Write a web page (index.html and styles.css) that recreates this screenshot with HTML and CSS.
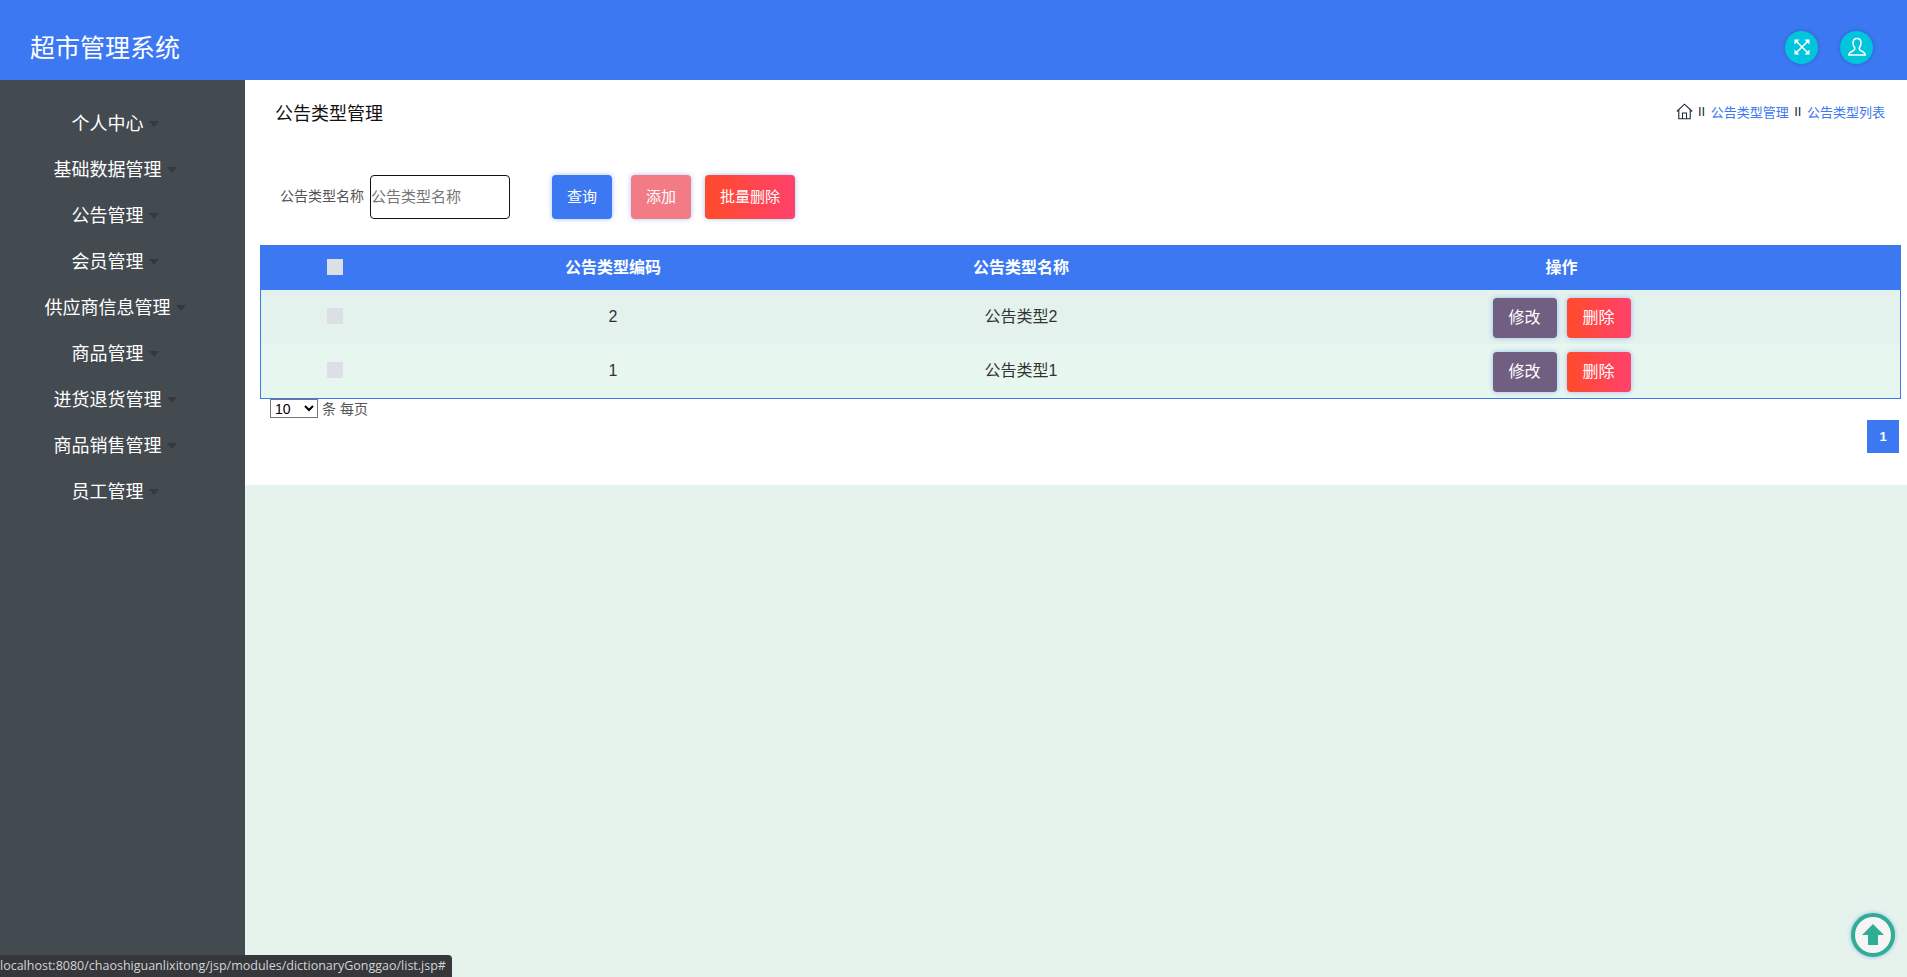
FILE: index.html
```html
<!DOCTYPE html>
<html>
<head>
<meta charset="utf-8">
<link rel="stylesheet" href="styles.css">
<title>超市管理系统</title>
</head>
<body>
<header class="topbar">
  <div class="brand">超市管理系统</div>
  <div class="top-actions">
    <a class="round-btn" href="#">
      <svg width="18" height="18" viewBox="0 0 18 18" fill="none" stroke="#fff" stroke-width="1.5">
        <path d="M3 3 L15 15 M15 3 L3 15"/>
        <path d="M1.5 6.5 V1.5 H6.5 Z M16.5 6.5 V1.5 H11.5 Z M1.5 11.5 V16.5 H6.5 Z M16.5 11.5 V16.5 H11.5 Z" fill="#fff" stroke="none"/>
      </svg>
    </a>
    <a class="round-btn" href="#">
      <svg width="20" height="20" viewBox="0 0 20 20" fill="none" stroke="#fff" stroke-width="1.5">
        <path d="M10 1.5 C7.3 1.5 6 3.5 6 6 C6 8.5 7 10 7.8 11 C8 12.5 7.5 13.2 6 13.8 C4 14.6 2 15.2 1.8 18 H18.2 C18 15.2 16 14.6 14 13.8 C12.5 13.2 12 12.5 12.2 11 C13 10 14 8.5 14 6 C14 3.5 12.7 1.5 10 1.5 Z"/>
      </svg>
    </a>
  </div>
</header>
<div class="layout">
  <nav class="sidebar">
    <a class="menu-item" href="#">个人中心</a>
    <a class="menu-item" href="#">基础数据管理</a>
    <a class="menu-item" href="#">公告管理</a>
    <a class="menu-item" href="#">会员管理</a>
    <a class="menu-item" href="#">供应商信息管理</a>
    <a class="menu-item" href="#">商品管理</a>
    <a class="menu-item" href="#">进货退货管理</a>
    <a class="menu-item" href="#">商品销售管理</a>
    <a class="menu-item" href="#">员工管理</a>
  </nav>
  <main class="main">
    <section class="card">
      <div class="title-row">
        <h3 class="page-title">公告类型管理</h3>
        <ol class="crumbs">
          <li>
            <svg class="home-icon" width="17" height="17" viewBox="0 0 17 17" fill="none" stroke="#1c2a3a" stroke-width="1.1">
              <path d="M0.8 8.5 L8.5 1.2 L16.2 8.5"/>
              <path d="M2.8 7 V15.8 H14.2 V7"/>
              <path d="M6.5 15.8 V10 H10.5 V15.8"/>
            </svg>
          </li>
          <li class="sep">II</li>
          <li><a href="#">公告类型管理</a></li>
          <li class="sep">II</li>
          <li><a href="#">公告类型列表</a></li>
        </ol>
      </div>
      <form class="search-row">
        <label class="search-label">公告类型名称</label>
        <input class="search-input" type="text" placeholder="公告类型名称">
        <button class="btn btn-blue btn-search" type="button">查询</button>
        <button class="btn btn-pink" type="button">添加</button>
        <button class="btn btn-red" type="button">批量删除</button>
      </form>
      <table class="data-table">
        <colgroup>
          <col class="col-check">
          <col class="col-code">
          <col class="col-name">
          <col class="col-ops">
        </colgroup>
        <thead>
          <tr>
            <th class="cell-check"><span class="check"></span></th>
            <th>公告类型编码</th>
            <th>公告类型名称</th>
            <th>操作</th>
          </tr>
        </thead>
        <tbody>
          <tr>
            <td class="cell-check"><span class="check"></span></td>
            <td class="cell-num">2</td>
            <td>公告类型2</td>
            <td class="ops"><button class="btn btn-row btn-purple" type="button">修改</button><button class="btn btn-row btn-red" type="button">删除</button></td>
          </tr>
          <tr>
            <td class="cell-check"><span class="check"></span></td>
            <td class="cell-num">1</td>
            <td>公告类型1</td>
            <td class="ops"><button class="btn btn-row btn-purple" type="button">修改</button><button class="btn btn-row btn-red" type="button">删除</button></td>
          </tr>
        </tbody>
      </table>
      <div class="page-size">
        <select class="size-select"><option>10</option></select>
        <span class="size-text">条 每页</span>
      </div>
      <div class="pager"><a class="page-num" href="#">1</a></div>
    </section>
  </main>
</div>
<a class="back-top" href="#">
  <svg width="26" height="26" viewBox="0 0 26 26"><path d="M13 2 L24 13 H18 V23 H8 V13 H2 Z" fill="#2fae94"/></svg>
</a>
<div class="status-bar">localhost:8080/chaoshiguanlixitong/jsp/modules/dictionaryGonggao/list.jsp#</div>
</body>
</html>
```
FILE: styles.css
```css
* {
	box-sizing: border-box;
}
html, body {
	height: 100%;
}
body {
	margin: 0;
	display: flex;
	flex-direction: column;
	overflow: hidden;
	font-family: "Liberation Sans", "Noto Sans CJK SC", sans-serif;
	font-size: 16px;
	color: #333;
	background-color: #e6f3ed;
}
a {
	text-decoration: none;
}

/* top bar */
.topbar {
	height: 80px;
	flex: none;
	display: flex;
	align-items: center;
	justify-content: space-between;
	padding: 14px 34px 0 30px;
	background-color: #3b78f1;
}
.brand {
	margin-top: 2px;
	font-size: 25px;
	color: #fff;
	line-height: 66px;
}
.top-actions {
	display: flex;
	gap: 22px;
}
.round-btn {
	width: 33px;
	height: 33px;
	border-radius: 50%;
	display: flex;
	align-items: center;
	justify-content: center;
	background-color: #00c5dc;
	box-shadow: 0 0 4px rgba(0, 0, 0, .2);
}

/* sidebar */
.layout {
	flex: 1;
	display: flex;
	min-height: 0;
}
.sidebar {
	width: 245px;
	flex: none;
	padding: 19px 15px 0 0;
	background-color: #434a50;
}
.menu-item {
	height: 46px;
	display: flex;
	align-items: center;
	justify-content: center;
	font-size: 18px;
	color: #fff;
}
.menu-item::after {
	content: "";
	margin-left: 5px;
	margin-top: 3px;
	border-top: 6px solid #35393d;
	border-left: 5.5px solid transparent;
	border-right: 5.5px solid transparent;
}

/* main card */
.main {
	flex: 1;
	min-width: 0;
}
.card {
	height: 405px;
	padding: 0 6px 0 15px;
	background-color: #fff;
}
.title-row {
	height: 64px;
	display: flex;
	align-items: center;
	justify-content: space-between;
	padding: 0 16px 0 15px;
}
.page-title {
	margin: 0;
	font-size: 18px;
	font-weight: 400;
	color: #111;
}
.crumbs {
	margin: -2px 0 0;
	padding: 0;
	list-style: none;
	display: flex;
	align-items: center;
	gap: 5.5px;
	font-size: 13px;
}
.crumbs a {
	color: #3b78f1;
}
.crumbs .sep {
	color: #1c2a3a;
}
.home-icon {
	display: block;
}

/* search */
.search-row {
	height: 44px;
	margin-top: 31px;
	display: flex;
	align-items: center;
	padding-left: 20px;
}
.search-label {
	margin: -4px 6px 0 0;
	font-size: 14px;
	color: #555;
}
.search-input {
	width: 140px;
	height: 44px;
	padding: 0 0 2px;
	border: 1px solid #111;
	border-radius: 4px;
	font-family: inherit;
	font-size: 15px;
	outline: none;
}
.search-input::placeholder {
	color: #757575;
}
.btn {
	height: 44px;
	padding: 0 15px 3px;
	border: 0;
	border-radius: 4px;
	font-family: inherit;
	font-size: 15px;
	color: #fff;
	box-shadow: 0 0 5px rgba(59, 120, 241, .45);
}
.btn-search {
	margin-left: 42px;
}
.btn-pink {
	margin-left: 19px;
	background-color: #f27b85;
}
.btn-pink + .btn-red {
	margin-left: 14px;
}
.btn-blue {
	background-color: #3b78f1;
}
.btn-red {
	background-image: linear-gradient(to right, #ff4b2b, #ff416c);
}
.btn-purple {
	background-color: #705f80;
}
.btn-row {
	width: 64px;
	height: 40px;
	padding: 0 0 4px;
	font-size: 16px;
}
.btn-row + .btn-row {
	margin-left: 10px;
}

/* table */
.data-table {
	width: 100%;
	margin-top: 26px;
	border-collapse: separate;
	border-spacing: 0;
	table-layout: fixed;
	border: 1px solid #3b78f1;
	border-top: 0;
}
.col-check {
	width: 146px;
}
.col-code {
	width: 412px;
}
.col-name {
	width: 404px;
}
.data-table th {
	height: 45px;
	padding: 0 0 4px;
	background-color: #3b78f1;
	color: #fff;
	font-size: 16px;
	font-weight: 700;
	text-align: center;
}
.data-table td {
	height: 54px;
	padding: 0 0 4px;
	text-align: center;
	background-color: #e3f2ed;
}
.data-table tbody tr + tr td {
	background-color: #e8f6f0;
}
.data-table .cell-check {
	padding: 0 0 2px 2px;
}
.data-table td.cell-check {
	padding-bottom: 4px;
}
.data-table td.cell-num {
	padding: 0;
}
.data-table td.ops {
	padding: 2px 0 0;
}
.check {
	display: inline-block;
	width: 16px;
	height: 16px;
	vertical-align: middle;
	background-color: #dcdfe6;
}

/* paging */
.page-size {
	height: 19px;
	display: flex;
	align-items: center;
	gap: 4px;
	padding-left: 10px;
	font-size: 14px;
	color: #555;
}
.size-text {
	margin-top: -2px;
}
.size-select {
	width: 48px;
	height: 19px;
	padding: 0;
	font-family: inherit;
	font-size: 14px;
	background-color: #fff;
}
.pager {
	display: flex;
	justify-content: flex-end;
	margin-top: 2px;
	padding-right: 2px;
}
.page-num {
	width: 32px;
	height: 33px;
	display: flex;
	align-items: center;
	justify-content: center;
	font-size: 13px;
	font-weight: 700;
	color: #fff;
	background-color: #3b78f1;
}

/* things lying over the page */
.back-top {
	position: fixed;
	right: 12px;
	bottom: 20px;
	width: 44px;
	height: 44px;
	border: 4px solid #2fae94;
	border-radius: 50%;
	display: flex;
	align-items: center;
	justify-content: center;
	background-color: #f5f5f5;
	box-shadow: 0 0 4px rgba(59, 120, 241, .5);
}
.status-bar {
	position: fixed;
	left: 0;
	bottom: 0;
	height: 22px;
	padding: 0 6px 0 0;
	border-top-right-radius: 4px;
	font-family: "Open Sans", sans-serif;
	font-size: 12.5px;
	line-height: 22px;
	color: #d4d4d4;
	background-color: #35373b;
	white-space: nowrap;
}
```
